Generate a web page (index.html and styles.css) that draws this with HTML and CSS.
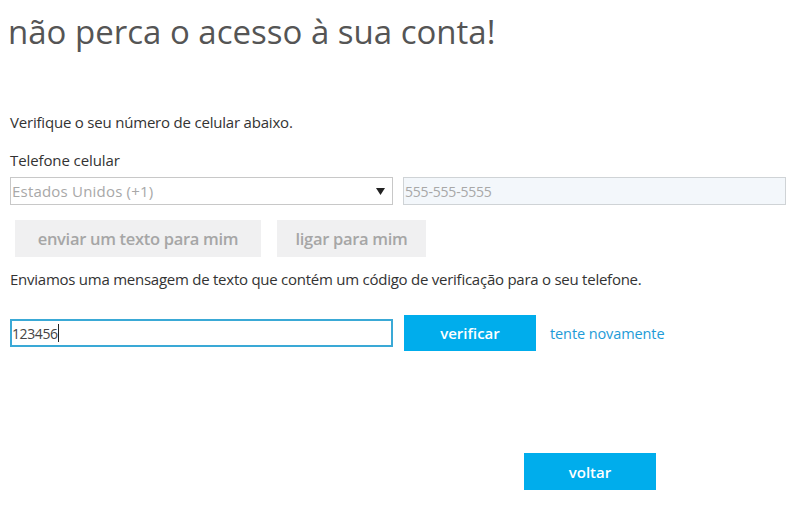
FILE: index.html
```html
<!DOCTYPE html>
<html lang="pt-BR">
<head>
<meta charset="utf-8">
<title>não perca o acesso à sua conta!</title>
<link rel="stylesheet" href="styles.css">
</head>
<body>
<div class="page">
  <h1 class="title">não perca o acesso à sua conta!</h1>
  <p class="intro">Verifique o seu número de celular abaixo.</p>
  <label class="label">Telefone celular</label>
  <div class="phone-row">
    <div class="select">
      <span class="select-text">Estados Unidos (+1)</span>
      <svg class="caret" width="9" height="7" viewBox="0 0 9 7"><path d="M0 0H9L4.5 7Z" fill="#222"/></svg>
    </div>
    <div class="phone-input">555-555-5555</div>
  </div>
  <div class="btn-row">
    <button class="btn-gray btn-text">enviar um texto para mim</button>
    <button class="btn-gray btn-call">ligar para mim</button>
  </div>
  <p class="sent">Enviamos uma mensagem de texto que contém um código de verificação para o seu telefone.</p>
  <div class="code-row">
    <div class="code-input">123456<span class="cursor"></span></div>
    <button class="btn-blue btn-verify">verificar</button>
    <a class="link" href="#">tente novamente</a>
  </div>
  <div class="back-row">
    <button class="btn-blue btn-back">voltar</button>
  </div>
</div>
</body>
</html>
```
FILE: styles.css
```css
* { box-sizing: border-box; }
html, body { margin: 0; padding: 0; background: #fff; }
body {
  font-family: "Open Sans", "Noto Sans", "Liberation Sans", sans-serif;
  color: #333;
}
.page {
  width: 800px;
  height: 515px;
  padding: 0 10px;
  display: flex;
  flex-direction: column;
}
.title {
  margin: 11px 0 0 -2px;
  font-size: 33px;
  font-weight: 400;
  color: #555;
  line-height: 42px;
  letter-spacing: 0;
}
.intro {
  margin: 59px 0 0 0;
  font-size: 15px;
  line-height: 20px;
  color: #333;
  letter-spacing: -0.2px;
}
.label {
  margin-top: 18px;
  font-size: 15px;
  line-height: 20px;
  color: #333;
  font-weight: 500;
  letter-spacing: -0.1px;
}
.phone-row {
  margin-top: 7px;
  display: flex;
  gap: 10px;
}
.select {
  width: 383px;
  height: 28px;
  border: 1px solid #c8c8c8;
  display: flex;
  align-items: center;
  justify-content: space-between;
  padding: 0 7px 0 1px;
  font-size: 15px;
  color: #a8a8a8;
}
.select-text { letter-spacing: 0.2px; }
.caret { display: block; }
.phone-input {
  width: 383px;
  height: 28px;
  border: 1px solid #cfd3d6;
  background: #f3f7fb;
  display: flex;
  align-items: center;
  padding: 0 1px;
  font-size: 14px;
  color: #a8a8a8;
  letter-spacing: -0.2px;
}
.btn-row {
  margin-top: 15px;
  padding-left: 5px;
  display: flex;
  gap: 16px;
}
button {
  font-family: inherit;
  border: none;
  cursor: pointer;
}
.btn-gray {
  height: 37px;
  background: #f0f0f1;
  color: #a6a6a6;
  font-size: 16.5px;
  font-weight: 600;
  padding: 0;
  letter-spacing: -0.3px;
}
.btn-text { width: 246px; }
.btn-call { width: 149px; }
.sent {
  margin: 12px 0 0 0;
  font-size: 15px;
  line-height: 20px;
  color: #333;
  letter-spacing: -0.25px;
}
.code-row {
  margin-top: 26px;
  display: flex;
  align-items: center;
}
.code-input {
  width: 383px;
  height: 28px;
  border: 2px solid #3aa9d6;
  display: flex;
  align-items: center;
  font-size: 14px;
  color: #444;
  padding: 0;
  letter-spacing: -0.4px;
}
.cursor {
  display: inline-block;
  width: 1px;
  height: 18px;
  background: #222;
}
.btn-blue {
  background: #00adec;
  color: #fff;
  font-size: 15px;
  font-weight: 600;
  padding: 0;
}
.btn-verify {
  width: 132px;
  height: 36px;
  margin-left: 11px;
}
.link {
  margin-left: 14px;
  font-size: 14.5px;
  color: #1e9bd7;
  text-decoration: none;
  letter-spacing: -0.1px;
}
.back-row {
  margin-top: 102px;
  display: flex;
  padding-left: 514px;
}
.btn-back {
  width: 132px;
  height: 37px;
}
```
